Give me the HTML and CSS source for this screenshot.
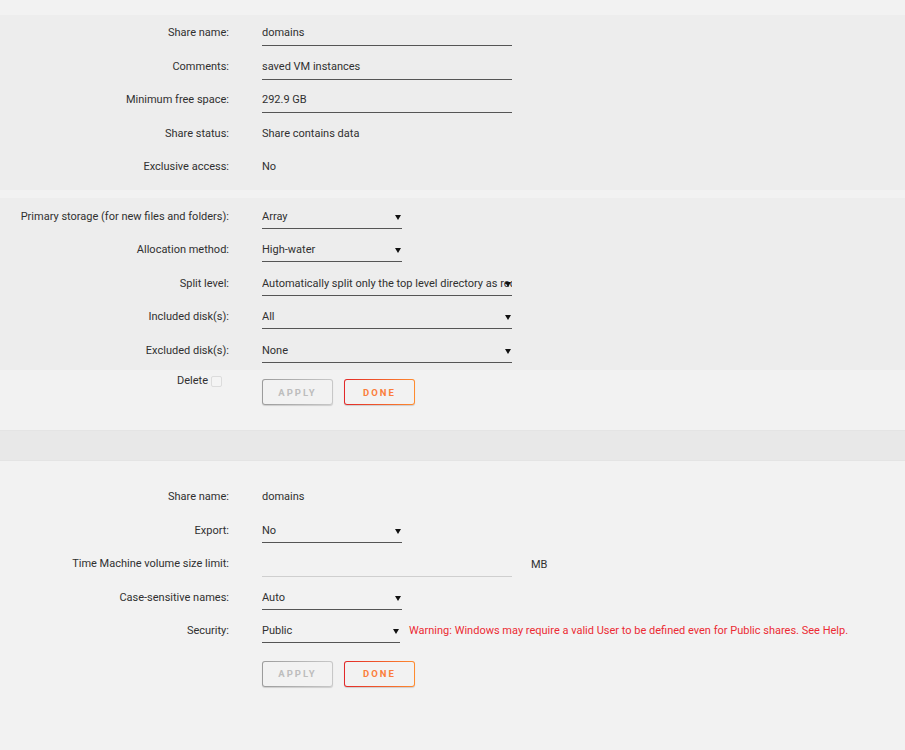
FILE: index.html
```html
<!DOCTYPE html>
<html lang="en">
<head>
  <meta charset="UTF-8" />
  <title>Share Settings</title>
  <link rel="stylesheet" href="styles.css">
</head>
<body>

  <div class="top-gap"></div>

  <!-- Share info -->
  <div class="panel shade first">
    <div class="row">
      <div class="label">Share name:</div>
      <div class="value"><input class="field" type="text" value="domains"></div>
    </div>
    <div class="row">
      <div class="label">Comments:</div>
      <div class="value"><input class="field" type="text" value="saved VM instances"></div>
    </div>
    <div class="row">
      <div class="label">Minimum free space:</div>
      <div class="value"><input class="field" type="text" value="292.9 GB"></div>
    </div>
    <div class="row">
      <div class="label">Share status:</div>
      <div class="value">Share contains data</div>
    </div>
    <div class="row">
      <div class="label">Exclusive access:</div>
      <div class="value">No</div>
    </div>
  </div>

  <!-- Storage settings -->
  <div class="panel shade second">
    <div class="row">
      <div class="label">Primary storage (for new files and folders):</div>
      <div class="value">
        <span class="pick"><select><option>Array</option></select></span>
      </div>
    </div>
    <div class="row">
      <div class="label">Allocation method:</div>
      <div class="value">
        <span class="pick"><select><option>High-water</option></select></span>
      </div>
    </div>
    <div class="row">
      <div class="label">Split level:</div>
      <div class="value">
        <span class="pick wide"><select><option>Automatically split only the top level directory as required</option></select></span>
      </div>
    </div>
    <div class="row">
      <div class="label">Included disk(s):</div>
      <div class="value">
        <span class="pick wide"><select><option>All</option></select></span>
      </div>
    </div>
    <div class="row">
      <div class="label">Excluded disk(s):</div>
      <div class="value">
        <span class="pick wide"><select><option>None</option></select></span>
      </div>
    </div>
  </div>

  <div class="panel actions-row">
    <div class="delete">Delete <span class="box"></span></div>
    <div class="buttons">
      <button class="btn apply">Apply</button>
      <button class="btn done">Done</button>
    </div>
  </div>

  <div class="band"></div>

  <!-- SMB settings -->
  <div class="panel third">
    <div class="row">
      <div class="label">Share name:</div>
      <div class="value">domains</div>
    </div>
    <div class="row">
      <div class="label">Export:</div>
      <div class="value">
        <span class="pick"><select><option>No</option></select></span>
      </div>
    </div>
    <div class="row">
      <div class="label">Time Machine volume size limit:</div>
      <div class="value">
        <input class="field light" type="text" value="">
        <span class="unit">MB</span>
      </div>
    </div>
    <div class="row">
      <div class="label">Case-sensitive names:</div>
      <div class="value">
        <span class="pick"><select><option>Auto</option></select></span>
      </div>
    </div>
    <div class="row">
      <div class="label">Security:</div>
      <div class="value">
        <span class="pick narrow"><select><option>Public</option></select></span>
        <span class="warning">Warning: Windows may require a valid User to be defined even for Public shares. See Help.</span>
      </div>
    </div>
    <div class="buttons end">
      <button class="btn apply">Apply</button>
      <button class="btn done">Done</button>
    </div>
  </div>

</body>
</html>
```

FILE: styles.css
```css
/* General styles */
body {
  margin: 0;
  background: #f2f2f2;
  color: #303030;
  font-family: Roboto, "Noto Sans", sans-serif;
  font-size: 11px;
}

.top-gap {
  height: 15px;
}

/* Panels */
.panel.shade {
  background: #ededed;
}

.first {
  padding-top: 1px;
  padding-bottom: 6px;
}

.second {
  margin-top: 8px;
  padding-top: 2px;
  padding-bottom: 3px;
}

.third {
  padding-top: 19px;
  padding-bottom: 40px;
}

/* Form rows */
.row {
  display: flex;
  height: 33.5px;
}

.label {
  width: 229px;
  flex-shrink: 0;
  margin-top: 9px;
  line-height: 16px;
  text-align: right;
  white-space: nowrap;
}

.value {
  margin-left: 33px;
  margin-top: 9px;
  line-height: 16px;
  display: flex;
  align-items: flex-start;
  white-space: nowrap;
}

.field {
  width: 250px;
  height: 16px;
  padding: 0 0 4px;
  margin: 0;
  border: none;
  border-bottom: 1px solid #555;
  background: transparent;
  font: inherit;
  color: inherit;
  outline: none;
}

.field.light {
  border-bottom-color: #cfcfcf;
}

.unit {
  margin-left: 19px;
  margin-top: 1px;
}

/* Drop-downs */
.pick {
  position: relative;
  display: inline-block;
  width: 140px;
}

.pick.wide {
  width: 250px;
}

.pick.narrow {
  width: 138px;
}

.pick select {
  width: 100%;
  height: 20px;
  box-sizing: border-box;
  padding: 0 0 3px;
  margin: 0;
  border: none;
  border-bottom: 1px solid #555;
  border-radius: 0;
  background: transparent;
  font: inherit;
  line-height: 16px;
  color: inherit;
  appearance: none;
  -webkit-appearance: none;
  outline: none;
}

.pick::after {
  content: "";
  position: absolute;
  right: 1px;
  top: 6px;
  border-left: 3px solid transparent;
  border-right: 3px solid transparent;
  border-top: 5px solid #111;
}

.warning {
  margin-left: 9px;
  color: #ec2b34;
}

/* Delete + buttons */
.actions-row {
  display: flex;
  height: 60px;
}

.delete {
  width: 222px;
  padding-right: 7px;
  flex-shrink: 0;
  margin-top: 3px;
  line-height: 16px;
  display: flex;
  justify-content: flex-end;
  align-items: center;
  align-self: flex-start;
  gap: 3px;
}

.box {
  width: 9px;
  height: 9px;
  border: 1px solid #dcdcdc;
  border-radius: 2px;
  background: #f4f4f4;
  margin-top: 1px;
}

.buttons {
  margin-left: 33px;
  margin-top: 9px;
  display: flex;
  gap: 11px;
  align-self: flex-start;
}

.buttons.end {
  margin-left: 262px;
  margin-top: 13px;
}

.btn {
  width: 71px;
  height: 26px;
  padding: 0;
  border-radius: 3px;
  font-family: inherit;
  font-size: 9.5px;
  font-weight: bold;
  letter-spacing: 2px;
  text-transform: uppercase;
  box-shadow: 0 1px 1px rgba(0, 0, 0, 0.15);
  cursor: pointer;
}

.btn.apply {
  border: 1px solid transparent;
  background: linear-gradient(#f2f2f2, #f2f2f2) padding-box,
              linear-gradient(90deg, #9c9c9c, #c8c8c8) border-box;
  color: #bdbdbd;
}

.btn.done {
  border: 1px solid transparent;
  background: linear-gradient(#f2f2f2, #f2f2f2) padding-box,
              linear-gradient(90deg, #e22828, #ff8c2f) border-box;
  color: #fb7d3a;
}

/* Divider band */
.band {
  height: 29px;
  background: #e8e8e8;
  border-top: 1px solid #e4e4e4;
  border-bottom: 1px solid #e4e4e4;
}
```
